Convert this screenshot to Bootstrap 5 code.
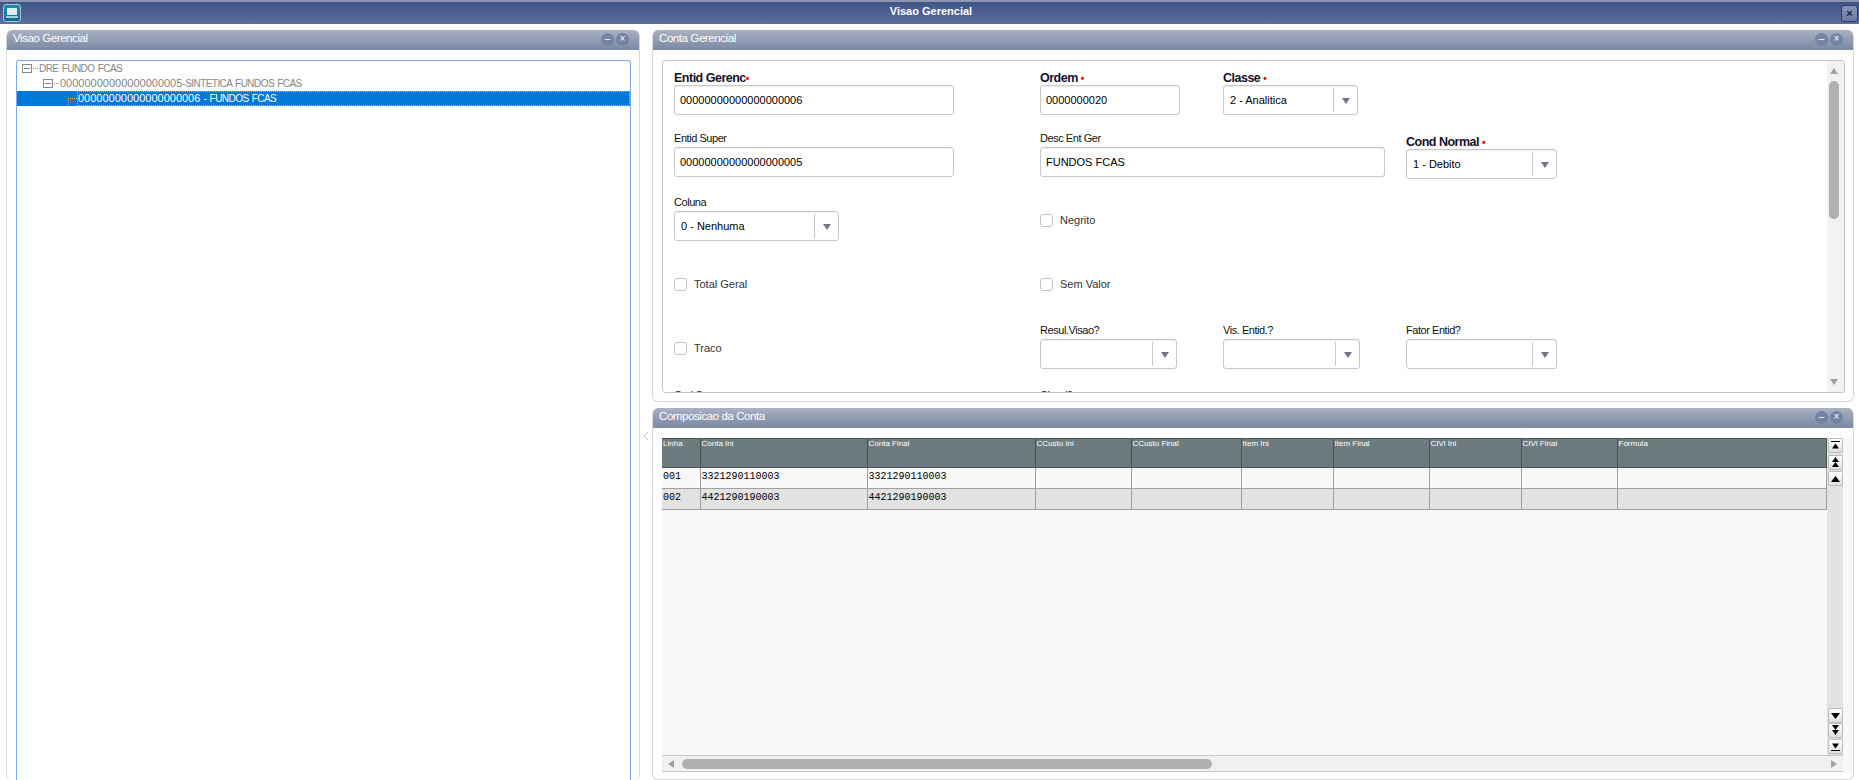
<!DOCTYPE html>
<html lang="pt">
<head>
<meta charset="utf-8">
<title>Visao Gerencial</title>
<link href="https://cdn.jsdelivr.net/npm/bootstrap@5.3.0/dist/css/bootstrap.min.css" rel="stylesheet">
<style>
html,body{height:100%;margin:0;overflow:hidden;background:#fff;}
body{width:1859px;height:780px;font-family:"Liberation Sans",Arial,sans-serif;font-size:12px;color:#000;}
.appbar{height:24px;background:linear-gradient(#3f5486,#5b6d9d);border-top:2px solid #8d97b3;padding:0 1px 0 3px;}
.appbar-title{color:#fff;font-weight:700;font-size:11px;margin-bottom:4px;}
.appbtn-icon{width:18px;height:18px;border:1px solid #a9c7d8;border-radius:3px;background:linear-gradient(#1c8fa8,#0c6c8e);}
.appbtn-close{width:17px;height:17px;border:1px solid #2c3d6a;border-radius:3px;background:linear-gradient(#8492b6,#6b7aa2);color:#13223f;font-size:11px;font-weight:700;line-height:15px;text-align:center;}
.workarea{height:756px;padding:6px 5px 0 6px;}
.leftcol{width:634px;}
.splitter{width:12px;padding:401px 0 0 3px;}
.rightcol{width:1202px;}
.pane{border:1px solid #d8d8d8;border-top:0;border-radius:6px;background:#fff;overflow:hidden;}
.pane-left{height:750px;border-bottom:0;}
.pane-form{height:372px;}
.pane-grid{height:372px;margin-top:6px;}
.panehead{height:20px;background:linear-gradient(#a9b0c1,#7a88a5);color:#fff;font-size:11.5px;letter-spacing:-.42px;padding:0 10px 2px 6px;flex:none;}
.panebtns{gap:2px;letter-spacing:0;}
.panebtn{width:13px;height:13px;border-radius:50%;background:#7383a3;color:#fff;font-size:10px;line-height:12px;text-align:center;}
.treebox{margin:10px 0 0 9px;width:615px;height:720px;border:1px solid #7ba7ef;border-bottom:0;border-radius:3px 3px 0 0;color:#858585;font-size:11px;}
.treerow{height:15px;line-height:15px;white-space:nowrap;}
.treesel{background:#0078d7;color:#fff;}
.treesel .treelabel{flex:1;border:1px dotted #f0a860;line-height:13px;height:15px;}
.letters{font-size:10px;letter-spacing:-.55px;word-spacing:1px;}
.plusbox{width:10px;height:9px;border:1px solid #888;position:relative;flex:none;}
.plusbox::after{content:"";position:absolute;left:1px;right:1px;top:3px;border-top:1px solid #888;}
.dotline{border-top:1px dotted #999;height:0;width:5px;flex:none;margin:0 1px;}
.dotsel{border-top:1px dotted #e6b070;border-left:1px dotted #e6b070;height:7px;width:9px;margin:0 0 0 51px;flex:none;align-self:flex-start;transform:translateY(7px);}
.indent1{margin-left:5px;}
.indent2{margin-left:26px;}
.formbox{margin:10px 0 0 9px;width:1183px;height:333px;border:1px solid #c4c4c4;border-radius:3px;position:relative;overflow:hidden;}
.formscroll{position:absolute;right:0;top:0;bottom:0;width:17px;background:#f2f2f2;}
.vthumb{position:absolute;left:2px;top:20px;width:10px;height:138px;border-radius:5px;background:#b0b0b0;}
.tri-up,.tri-down,.tri-left,.tri-right{width:0;height:0;position:absolute;}
.tri-up{border:4px solid transparent;border-top:0;border-bottom:6px solid #a0a0a0;left:3px;top:7px;}
.tri-down{border:4px solid transparent;border-bottom:0;border-top:6px solid #a0a0a0;left:3px;bottom:7px;}
.fieldset{position:relative;height:100%;}
.fld{position:absolute;}
.fld label{display:block;font-size:11px;letter-spacing:-.45px;line-height:12px;height:18px;padding-top:3px;color:#111;white-space:nowrap;}
.fld label.req{font-weight:700;font-size:12.5px;letter-spacing:-.5px;padding-top:5px;color:#14102c;}
.reddot{color:#f00;font-size:10px;}
.inp{height:30px;border:1px solid #c8c8c8;border-radius:3px;background:#fff;font-size:11px;line-height:28px;padding-left:5px;box-shadow:inset 0 1px 1px #eee;white-space:nowrap;}
.sel{display:flex;padding-left:6px;padding-right:0;}
.sel b{flex:1;font-weight:400;}
.sel i{width:24px;margin:2px 0;border-left:1px solid #c8c8c8;position:relative;display:block;}
.sel i::after{content:"";position:absolute;left:8px;top:10px;border:4px solid transparent;border-bottom:0;border-top:6px solid #6e7585;}
.chk{width:13px;height:13px;border:1px solid #c4c4c4;border-radius:3px;background:#fff;flex:none;}
.chkrow{font-size:11px;color:#333;gap:7px;white-space:nowrap;}
.gridwrap{margin:10px 0 0 9px;width:1190px;height:334px;position:relative;background:#f8f8f8;}
.gridtable{width:1165px;border-collapse:collapse;table-layout:fixed;}
.gridtable th{height:29px;background:#6e7b7e;color:#fff;font-weight:400;font-size:8px;line-height:10px;vertical-align:top;padding:0 0 0 1px;border:1px solid #4a5254;border-width:1px 1px 1px 0;overflow:hidden;white-space:nowrap;}
.gridtable td{height:21px;font-family:"Liberation Mono","DejaVu Sans Mono",monospace;font-size:10px;padding:0 0 3px 1px;border-right:1px solid #a0a0a0;border-bottom:1px solid #a0a0a0;white-space:nowrap;}
.rowa td{background:#f8f8f8;}
.rowb td{background:#e2e2e2;}
.sidescroll{position:absolute;left:1165px;top:0;width:16px;height:317px;background:#e2e2e2;}
.sbtn{position:absolute;left:1px;width:15px;height:15px;border:1px solid #bbb;border-radius:2px;background:linear-gradient(#fff,#e0e0e0);display:flex;align-items:center;justify-content:center;}
.hscroll{position:absolute;left:0;top:317px;width:1181px;height:17px;background:#f0f0f0;border-top:1px solid #c8c8c8;border-bottom:1px solid #c8c8c8;}
.hthumb{position:absolute;left:20px;top:3px;height:10px;width:530px;border-radius:5px;background:#b0b0b0;}
.tleft{border:4px solid transparent;border-left:0;border-right:6px solid #a0a0a0;left:6px;top:4px;}
.tright{border:4px solid transparent;border-right:0;border-left:6px solid #a0a0a0;right:6px;top:4px;}
</style>
</head>
<body>
<div class="appbar d-flex align-items-center justify-content-between">
  <div class="appbtn-icon d-flex align-items-center justify-content-center"><svg width="12" height="11" viewBox="0 0 12 11"><rect x="1" y="0" width="10" height="7" fill="#dfeaf2"/><rect x="0" y="8" width="12" height="2" fill="#9fd0de"/></svg></div>
  <div class="appbar-title">Visao Gerencial</div>
  <div class="appbtn-close">×</div>
</div>
<div class="workarea d-flex">
  <div class="leftcol">
    <div class="pane pane-left d-flex flex-column">
      <div class="panehead d-flex align-items-center justify-content-between"><span>Visao Gerencial</span><span class="panebtns d-flex"><span class="panebtn">–</span><span class="panebtn">×</span></span></div>
      <div class="treebox">
        <div class="treerow d-flex align-items-center"><span class="plusbox indent1"></span><span class="dotline"></span><span class="letters">DRE FUNDO FCAS</span></div>
        <div class="treerow d-flex align-items-center"><span class="plusbox indent2"></span><span class="dotline"></span><span>00000000000000000005<span class="letters">-SINTETICA FUNDOS FCAS</span></span></div>
        <div class="treerow treesel d-flex align-items-center"><span class="dotsel"></span><span class="treelabel">00000000000000000006<span class="letters"> - FUNDOS FCAS</span></span></div>
      </div>
    </div>
  </div>
  <div class="splitter"><svg class="d-block" width="6" height="10" viewBox="0 0 6 10"><path d="M5 1L1 5l4 4" fill="none" stroke="#c4c4c4" stroke-width="1"/></svg></div>
  <div class="rightcol">
    <div class="pane pane-form d-flex flex-column">
      <div class="panehead d-flex align-items-center justify-content-between"><span>Conta Gerencial</span><span class="panebtns d-flex"><span class="panebtn">–</span><span class="panebtn">×</span></span></div>
      <div class="formbox">
        <div class="fieldset">
          <div class="fld" style="left:11px;top:6px;width:280px"><label class="req">Entid Gerenc<span class="reddot">•</span></label><div class="inp">00000000000000000006</div></div>
          <div class="fld" style="left:377px;top:6px;width:140px"><label class="req">Ordem <span class="reddot">•</span></label><div class="inp">0000000020</div></div>
          <div class="fld" style="left:560px;top:6px;width:135px"><label class="req">Classe <span class="reddot">•</span></label><div class="inp sel"><b>2 - Analitica</b><i></i></div></div>
          <div class="fld" style="left:11px;top:68px;width:280px"><label>Entid Super</label><div class="inp">00000000000000000005</div></div>
          <div class="fld" style="left:377px;top:68px;width:345px"><label>Desc Ent Ger</label><div class="inp">FUNDOS FCAS</div></div>
          <div class="fld" style="left:743px;top:70px;width:151px"><label class="req">Cond Normal <span class="reddot">•</span></label><div class="inp sel"><b>1 - Debito</b><i></i></div></div>
          <div class="fld" style="left:11px;top:132px;width:165px"><label>Coluna</label><div class="inp sel"><b>0 - Nenhuma</b><i></i></div></div>
          <div class="fld d-flex align-items-center chkrow" style="left:377px;top:151px"><span class="chk"></span><span>Negrito</span></div>
          <div class="fld d-flex align-items-center chkrow" style="left:11px;top:215px"><span class="chk"></span><span>Total Geral</span></div>
          <div class="fld d-flex align-items-center chkrow" style="left:377px;top:215px"><span class="chk"></span><span>Sem Valor</span></div>
          <div class="fld d-flex align-items-center chkrow" style="left:11px;top:279px"><span class="chk"></span><span>Traco</span></div>
          <div class="fld" style="left:377px;top:260px;width:137px"><label>Resul.Visao?</label><div class="inp sel"><b></b><i></i></div></div>
          <div class="fld" style="left:560px;top:260px;width:137px"><label>Vis. Entid.?</label><div class="inp sel"><b></b><i></i></div></div>
          <div class="fld" style="left:743px;top:260px;width:151px"><label>Fator Entid?</label><div class="inp sel"><b></b><i></i></div></div>
          <div class="fld" style="left:11px;top:325px"><label>Cod.Super</label></div>
          <div class="fld" style="left:377px;top:325px"><label>Classific</label></div>
        </div>
        <div class="formscroll"><span class="tri-up"></span><span class="vthumb"></span><span class="tri-down"></span></div>
      </div>
    </div>
    <div class="pane pane-grid d-flex flex-column">
      <div class="panehead d-flex align-items-center justify-content-between"><span>Composicao da Conta</span><span class="panebtns d-flex"><span class="panebtn">–</span><span class="panebtn">×</span></span></div>
      <div class="gridwrap">
        <table class="gridtable">
          <colgroup><col style="width:38px"><col style="width:167px"><col style="width:168px"><col style="width:96px"><col style="width:110px"><col style="width:92px"><col style="width:96px"><col style="width:92px"><col style="width:96px"><col></colgroup>
          <thead><tr><th>Linha</th><th>Conta Ini</th><th>Conta Final</th><th>CCusto Ini</th><th>CCusto Final</th><th>Item Ini</th><th>Item Final</th><th>CIVl Ini</th><th>CIVl Final</th><th>Formula</th></tr></thead>
          <tbody>
            <tr class="rowa"><td>001</td><td>3321290110003</td><td>3321290110003</td><td></td><td></td><td></td><td></td><td></td><td></td><td></td></tr>
            <tr class="rowb"><td>002</td><td>4421290190003</td><td>4421290190003</td><td></td><td></td><td></td><td></td><td></td><td></td><td></td></tr>
          </tbody>
        </table>
        <div class="sidescroll">
          <span class="sbtn" style="top:0"><svg width="9" height="9" viewBox="0 0 9 9"><path d="M0 0h9v1H0zM4.500 2.500L8 7.500H1z"/></svg></span>
          <span class="sbtn" style="top:17px"><svg width="9" height="11" viewBox="0 0 9 11"><path d="M4.500 0L8 5H1zM4.500 5L8 10H1z"/></svg></span>
          <span class="sbtn" style="top:33px"><svg width="9" height="6" viewBox="0 0 9 6"><path d="M4.500 0L9 6H0z"/></svg></span>
          <span class="sbtn" style="top:270px"><svg width="9" height="6" viewBox="0 0 9 6"><path d="M4.500 6L9 0H0z"/></svg></span>
          <span class="sbtn" style="top:285px"><svg width="9" height="11" viewBox="0 0 9 11"><path d="M4.500 5L8 0H1zM4.500 10L8 5H1z"/></svg></span>
          <span class="sbtn" style="top:301px"><svg width="9" height="9" viewBox="0 0 9 9"><path d="M0 8h9v1H0zM4.500 6.500L8 1.500H1z"/></svg></span>
        </div>
        <div class="hscroll"><span class="tri-left tleft"></span><span class="hthumb"></span><span class="tri-right tright"></span></div>
      </div>
    </div>
  </div>
</div>
<script src="https://cdn.jsdelivr.net/npm/bootstrap@5.3.0/dist/js/bootstrap.bundle.min.js"></script>
</body>
</html>
